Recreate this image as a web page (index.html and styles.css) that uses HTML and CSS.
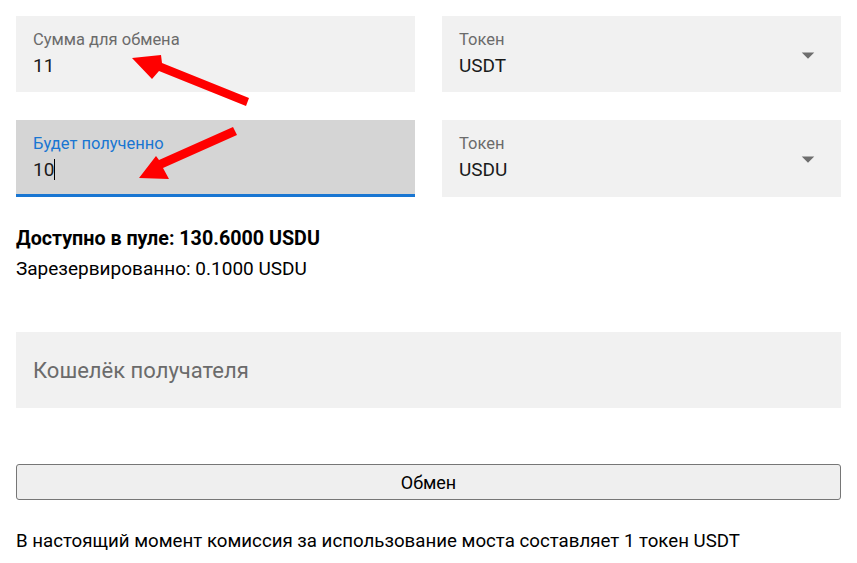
FILE: index.html
```html
<!DOCTYPE html>
<html lang="ru">
<head>
    <meta charset="UTF-8">
    <meta name="viewport" content="width=device-width, initial-scale=1.0">
    <title>Мост USDT / USDU</title>
    <link rel="stylesheet" href="styles.css">
</head>
<body>
    <div class="form-grid">
        <div class="field">
            <label class="field-label">Сумма для обмена</label>
            <div class="field-value">11</div>
        </div>
        <div class="field select">
            <label class="field-label">Токен</label>
            <div class="field-value">USDT</div>
            <svg class="arrow-drop" viewBox="0 0 24 24"><path d="M7 10l5 5 5-5z"></path></svg>
        </div>
        <div class="field focused">
            <label class="field-label">Будет полученно</label>
            <div class="field-value">10<span class="caret"></span></div>
        </div>
        <div class="field select tall">
            <label class="field-label">Токен</label>
            <div class="field-value">USDU</div>
            <svg class="arrow-drop" viewBox="0 0 24 24"><path d="M7 10l5 5 5-5z"></path></svg>
        </div>
    </div>

    <div class="pool-info">
        <p class="available">Доступно в пуле: 130.6000 USDU</p>
        <p class="reserved">Зарезервированно: 0.1000 USDU</p>
    </div>

    <div class="field wallet">
        <span class="placeholder">Кошелёк получателя</span>
    </div>

    <button class="swap-btn">Обмен</button>

    <p class="fee-note">В настоящий момент комиссия за использование моста составляет 1 токен USDT</p>

    <svg class="annotations" width="857" height="563" viewBox="0 0 857 563">
        <polygon points="249,98 246,106 159,71 152,79 132,58 161,55 162,63" fill="#ff0000"></polygon>
        <polygon points="233,127 237,135 163,168 169,179 139,178 156,156 159,160" fill="#ff0000"></polygon>
    </svg>
</body>
</html>
```

FILE: styles.css
```css
body {
    margin: 0;
    padding: 16px;
    font-family: Roboto, "Liberation Sans", Arial, sans-serif;
    color: #000;
    background: #fff;
    position: relative;
}
.form-grid {
    display: grid;
    grid-template-columns: 399px 399px;
    column-gap: 27px;
    row-gap: 28px;
}
.field {
    position: relative;
    box-sizing: border-box;
    height: 76px;
    padding: 15px 17px 0;
    background: #f1f1f1;
}
.field-label {
    display: block;
    font-size: 16.5px;
    line-height: 18px;
    color: #6b6b6b;
}
.field-value {
    font-size: 19px;
    line-height: 26px;
    margin-top: 4px;
    color: #1a1a1a;
}
.tall {
    height: 77px;
}
.focused {
    height: 77px;
    background: #d5d5d5;
    border-bottom: 3px solid #1976d2;
}
.focused .field-label {
    color: #1976d2;
}
.caret {
    display: inline-block;
    width: 1px;
    height: 21px;
    background: #000;
    vertical-align: -4px;
}
.arrow-drop {
    position: absolute;
    right: 18px;
    top: 24px;
    width: 30px;
    height: 30px;
    fill: #6e6e6e;
}
.pool-info {
    margin-top: 27px;
}
.pool-info p {
    margin: 0;
    line-height: 30px;
}
.available {
    font-size: 19.7px;
    font-weight: bold;
}
.reserved {
    font-size: 19px;
}
.wallet {
    margin-top: 48px;
    display: flex;
    align-items: center;
    padding: 0 17px;
}
.placeholder {
    font-size: 22px;
    color: #6b6b6b;
}
.swap-btn {
    display: block;
    box-sizing: border-box;
    width: 100%;
    height: 36px;
    margin-top: 56px;
    font-family: inherit;
    font-size: 18px;
    color: #000;
    background: #efefef;
    border: 1px solid #767676;
    border-radius: 3px;
}
.fee-note {
    margin: 29px 0 0;
    font-size: 18.7px;
    line-height: 24px;
}
.annotations {
    position: absolute;
    left: 0;
    top: 0;
    pointer-events: none;
}
```
